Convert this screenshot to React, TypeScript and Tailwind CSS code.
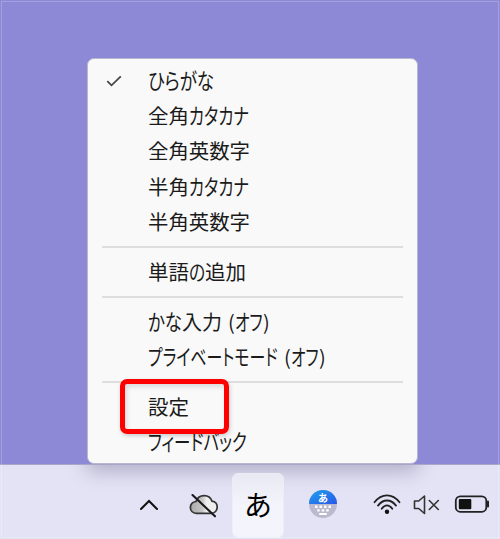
import React, { useLayoutEffect, useRef, useState } from "react";

type Run = { text: string; width: string; kana?: boolean };

function FittedRun({ text, width, kana = false }: Run) {
  const box = useRef<HTMLSpanElement>(null);
  const ink = useRef<HTMLSpanElement>(null);
  const [scale, setScale] = useState(1);

  useLayoutEffect(() => {
    if (box.current && ink.current) {
      setScale(box.current.offsetWidth / ink.current.offsetWidth);
    }
  }, [text]);

  return (
    <span ref={box} className={`block shrink-0 ${width}`}>
      <span
        ref={ink}
        className={
          kana
            ? "block w-max origin-left text-[22px] leading-[16px] [font-feature-settings:'palt']"
            : "block w-max origin-left text-[20px] leading-[20px]"
        }
        style={{ transform: `scaleX(${scale})` }}
      >
        {text}
      </span>
    </span>
  );
}

function Item({ runs, checked = false }: { runs: Run[]; checked?: boolean }) {
  return (
    <div className="flex h-[35.3px] items-center">
      <span className="flex w-[60px] shrink-0 pl-[18px]">
        {checked && (
          <svg width="16" height="12" viewBox="0 0 16 12" fill="none" stroke="#454545" strokeWidth="1.7">
            <path d="M1.3 6.2 5.5 10.4 14.8 1.3" />
          </svg>
        )}
      </span>
      <span className="flex h-[20px] whitespace-pre">
        {runs.map((r, i) => (
          <FittedRun key={i} {...r} />
        ))}
      </span>
    </div>
  );
}

function Separator() {
  return (
    <div className="flex h-[14.7px] items-center px-[14px]">
      <div className="h-[2px] w-full bg-[#dedede]" />
    </div>
  );
}

function Menu() {
  return (
    <div className="absolute left-[87px] top-[58px] z-10 h-[406px] w-[331px] rounded-[7px] border border-[#b9b7cf] bg-[#f9f9f9] pt-[4px]">
      <Item checked runs={[{ text: "ひらがな", width: "w-[66px]", kana: true }]} />
      <Item
        runs={[
          { text: "全角", width: "w-[41px]" },
          { text: "カタカナ", width: "w-[60px]", kana: true },
        ]}
      />
      <Item runs={[{ text: "全角英数字", width: "w-[102px]" }]} />
      <Item
        runs={[
          { text: "半角", width: "w-[41px]" },
          { text: "カタカナ", width: "w-[60px]", kana: true },
        ]}
      />
      <Item runs={[{ text: "半角英数字", width: "w-[102px]" }]} />
      <Separator />
      <Item
        runs={[
          { text: "単語", width: "w-[41px]" },
          { text: "の", width: "w-[16px]", kana: true },
          { text: "追加", width: "w-[41px]" },
        ]}
      />
      <Separator />
      <Item
        runs={[
          { text: "かな", width: "w-[34px]", kana: true },
          { text: "入力", width: "w-[40px] mr-[6px]" },
          { text: "(", width: "w-[7px]" },
          { text: "オフ", width: "w-[28px]", kana: true },
          { text: ")", width: "w-[7px]" },
        ]}
      />
      <Item
        runs={[
          { text: "プライベートモード", width: "w-[130px] mr-[6px]", kana: true },
          { text: "(", width: "w-[7px]" },
          { text: "オフ", width: "w-[28px]", kana: true },
          { text: ")", width: "w-[7px]" },
        ]}
      />
      <Separator />
      <Item runs={[{ text: "設定", width: "w-[41px]" }]} />
      <Item runs={[{ text: "フィードバック", width: "w-[99px]", kana: true }]} />
      <div className="absolute left-[32px] top-[320px] h-[55px] w-[109px] rounded-[7px] border-[5px] border-[#fe0000] shadow-[1px_2px_4px_rgba(0,0,0,0.18),inset_2px_3px_5px_rgba(0,0,0,0.12)]" />
    </div>
  );
}

function Taskbar() {
  return (
    <div className="relative flex h-[75px] w-full items-start overflow-hidden border-t border-[#aaa6c8] bg-[#e3e3f5] pt-[8px]">
      <div className="absolute -top-[60px] left-[87px] h-[60px] w-[331px] shadow-[0_6px_18px_rgba(40,35,80,0.28)]" />
      <svg className="ml-[139px] mt-[26px] shrink-0" width="20" height="12" viewBox="0 0 20 12" fill="none" stroke="#111" strokeWidth="2" strokeLinecap="round">
        <path d="M2 10 10 2 18 10" />
      </svg>
      <svg className="ml-[29px] mt-[18px] shrink-0" width="32" height="28" viewBox="0 0 32 28">
        <defs>
          <linearGradient id="cloud" x1="0" x2="1">
            <stop offset="0" stopColor="#aaa" />
            <stop offset=".45" stopColor="#c5c5c5" />
            <stop offset=".6" stopColor="#ededed" />
          </linearGradient>
        </defs>
        <path d="M8.5 22.3C4.5 22.3 2.4 19.5 2.4 16.5 2.4 13.3 4.8 11 8 10.5 9.3 6.8 12.5 4.7 16.2 4.7 20.2 4.7 22.8 6.8 24 10.2 27.3 10.7 29.2 13 29.2 16.1 29.2 19.5 26.8 22.3 23.3 22.3Z" fill="url(#cloud)" stroke="#333" strokeWidth="1.7" />
        <path d="m4.5 4 22.5 21.3" stroke="#191919" strokeWidth="2.1" strokeLinecap="round" />
      </svg>
      <div className="relative ml-[12px] flex h-[65px] w-[52px] shrink-0 items-center justify-center rounded-[6px] border border-[#ededf8] bg-gradient-to-b from-[#e9e9f3] to-[#f4f4fc] to-50% pb-[4px] text-[28px] text-black">
        あ
      </div>
      <div className="ml-[25px] mt-[17px] flex h-[28px] w-[28px] shrink-0 flex-col overflow-hidden rounded-full bg-[#b9bacd]">
        <div className="flex h-[14px] items-center justify-center bg-gradient-to-br from-[#1ea0ee] to-[#2b56e6] pt-[2px] text-[10px] font-bold leading-none text-white">あ</div>
        <svg width="28" height="14" viewBox="0 0 28 14" fill="#fff">
          <path d="M6 1.5h2.5V4H6zM10.5 1.5H13V4h-2.5zM15 1.5h2.5V4H15zM19.5 1.5H22V4h-2.5zM8.3 5.3h2.3v2.2H8.3zM12.8 5.3h2.4v2.2h-2.4zM17.3 5.3h2.4v2.2h-2.4zM10.2 9h7.6v2h-7.6z" />
        </svg>
      </div>
      <svg className="ml-[36px] mt-[20px] shrink-0" width="30" height="24" viewBox="0 0 30 24" fill="none" stroke="#222" strokeWidth="1.8" strokeLinecap="round">
        <path d="M1.5 9.3C8.6 .1 19.4 .1 26.5 9.3M5 12.6C10.2 5.8 17.8 5.8 23 12.6M8.7 15.8C12 11.3 16 11.3 19.3 15.8" />
        <circle cx="14" cy="18.7" r="2.2" fill="#111" stroke="none" />
      </svg>
      <svg className="ml-[9px] mt-[20px] shrink-0" width="30" height="24" viewBox="0 0 30 24" fill="none" stroke="#333" strokeWidth="1.6" strokeLinejoin="round">
        <path d="M2.5 8v7.5h4.2l5.8 5V3L6.7 8z" />
        <path d="m17.3 7.5 9 9M26.3 7.5l-9 9" strokeLinecap="round" />
      </svg>
      <svg className="ml-[10px] mt-[21px] shrink-0" width="38" height="20" viewBox="0 0 38 20" fill="none">
        <rect x="3.8" y="2.3" width="30.5" height="15.5" rx="4.5" stroke="#222" strokeWidth="1.8" />
        <rect x="6.8" y="5" width="12.5" height="10.2" rx="1" fill="#111" />
        <path d="M36 7.5v5" stroke="#222" strokeWidth="2" strokeLinecap="round" />
      </svg>
    </div>
  );
}

export default function App() {
  return (
    <div className="relative flex h-[539px] w-[500px] flex-col overflow-hidden bg-[#8e89d6] font-['Noto_Sans_CJK_JP',sans-serif] text-[20px] leading-none text-[#1b1b1b]">
      <div className="flex-1" />
      <Taskbar />
      <Menu />
      <div className="pointer-events-none absolute inset-px border border-white/20" />
    </div>
  );
}
